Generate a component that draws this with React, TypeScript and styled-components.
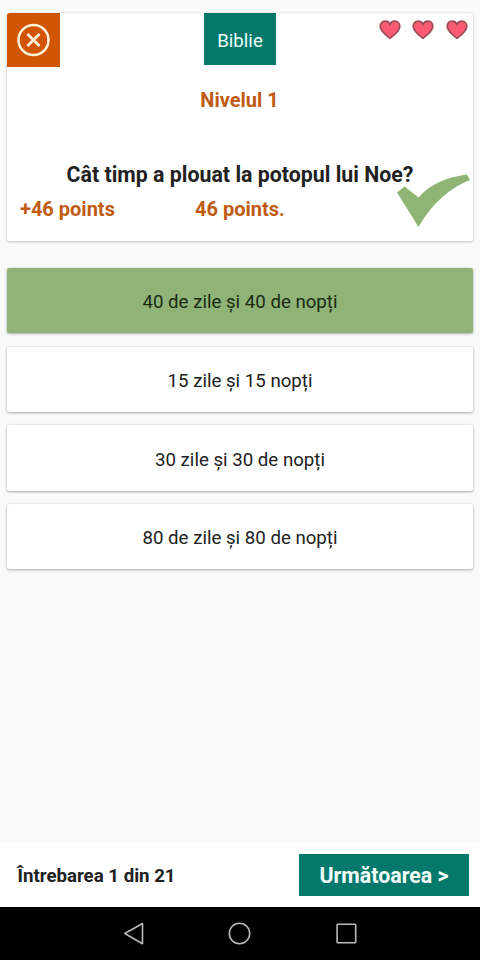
import React from "react";
import styled, { createGlobalStyle } from "styled-components";

const GlobalStyle = createGlobalStyle`
  * { box-sizing: border-box; }
  body { margin: 0; background: #fafafa; }
  button { border: 0; padding: 0; font: inherit; color: inherit; }
`;

const Screen = styled.div`
  width: 480px;
  height: 960px;
  display: flex;
  flex-direction: column;
  overflow: hidden;
  background: #fafafa;
  color: #212121;
  font-family: Roboto, sans-serif;
  white-space: nowrap;
`;

const Main = styled.main`
  flex: 1;
  min-height: 0;
  padding: 13px 7px 0;
`;

const QuestionCard = styled.section`
  height: 228px;
  border-radius: 2.5px;
  background: #fff;
  box-shadow: 0 1px 3px rgba(0, 0, 0, 0.2), 0 0 2px rgba(0, 0, 0, 0.12);
`;

const CardHeader = styled.header`
  display: grid;
  grid-template-columns: 1fr 72px 1fr;
  align-items: start;
  height: 66px;
`;

const CloseButton = styled.button`
  width: 53px;
  height: 54px;
  display: grid;
  place-items: center;
  border-radius: 2.5px 0 0 0;
  background: #d15604;
`;

const Category = styled.div`
  height: 52px;
  line-height: 56px;
  text-align: center;
  font-size: 18.67px;
  color: #e9fffa;
  background: #04796b;
`;

const Lives = styled.div`
  display: flex;
  justify-content: flex-end;
  gap: 11.4px;
  padding: 7px 5.5px 0 0;
`;

const Level = styled.h2`
  margin: 0;
  padding-right: 1px;
  height: 42px;
  line-height: 42px;
  text-align: center;
  font-size: 20px;
  font-weight: 700;
  color: #bf5b12;
`;

const Question = styled.h1`
  margin: 40px 0 0;
  height: 28px;
  line-height: 28px;
  text-align: center;
  font-size: 21.33px;
  font-weight: 700;
`;

const ScoreRow = styled.div`
  display: grid;
  grid-template-columns: 175px 1fr 76px;
  height: 40px;
  padding-left: 13px;
  line-height: 41px;
  font-size: 20px;
  font-weight: 700;
  color: #bf5b12;
`;

const CheckMark = styled.svg`
  display: block;
  margin-top: -15px;
`;

const Answers = styled.div`
  display: flex;
  flex-direction: column;
  gap: 13.3px;
  margin-top: 27px;
`;

const Answer = styled.button<{ $correct?: boolean }>`
  height: 65.4px;
  border-radius: 2.5px;
  padding-top: 3.4px;
  font-size: 18.67px;
  line-height: 62px;
  color: ${(p) => (p.$correct ? "#182b12" : "#212121")};
  background: ${(p) => (p.$correct ? "#90b377" : "#fff")};
  box-shadow: 0 1px 3px rgba(0, 0, 0, 0.3), 0 0 2px rgba(0, 0, 0, 0.12);
`;

const Footer = styled.footer`
  height: 64px;
  display: flex;
  align-items: center;
  justify-content: space-between;
  padding: 0 11px 0 17.5px;
  background: #fff;
`;

const Progress = styled.span`
  padding-top: 1px;
  font-size: 18.67px;
  font-weight: 700;
`;

const NextButton = styled.button`
  width: 170px;
  height: 42px;
  line-height: 40px;
  padding-top: 2px;
  font-size: 21.33px;
  font-weight: 700;
  color: #f4fffd;
  background: #04796b;
`;

const SystemBar = styled.nav`
  height: 53px;
  display: flex;
  justify-content: center;
  gap: 81.7px;
  padding: 14px 0.5px 0 0;
  background: #000;
`;

const NavIcon = styled.svg`
  width: 25px;
  height: 25px;
  fill: none;
  stroke: #b9b9b9;
  stroke-width: 1.6;
  stroke-linejoin: round;
`;

const Heart = () => (
  <svg width="22" height="20" viewBox="0 0 22 20">
    <path
      d="M11 18.2C7.6 15.6 1.2 11.2 1.2 6.2C1.2 3.2 3.4 1.2 6 1.2C8.3 1.2 10 2.2 11 4.2C12 2.2 13.7 1.2 16 1.2C18.6 1.2 20.8 3.2 20.8 6.2C20.8 11.2 14.4 15.6 11 18.2Z"
      fill="#fb5c74"
      stroke="#9b4c57"
      strokeWidth="1.7"
    />
  </svg>
);

const answers = [
  "40 de zile și 40 de nopți",
  "15 zile și 15 nopți",
  "30 zile și 30 de nopți",
  "80 de zile și 80 de nopți",
];

export default function App() {
  return (
    <>
      <GlobalStyle />
      <Screen>
        <Main>
          <QuestionCard>
            <CardHeader>
              <CloseButton aria-label="Închide">
                <svg width="34" height="34" viewBox="0 0 34 34" fill="none" stroke="#fff1da">
                  <circle cx="16.5" cy="17" r="15" strokeWidth="2.5" />
                  <path d="M11.2 11.7L21.8 22.3M21.8 11.7L11.2 22.3" strokeWidth="2.8" strokeLinecap="round" />
                </svg>
              </CloseButton>
              <Category>Biblie</Category>
              <Lives>
                <Heart />
                <Heart />
                <Heart />
              </Lives>
            </CardHeader>
            <Level>Nivelul 1</Level>
            <Question>Cât timp a plouat la potopul lui Noe?</Question>
            <ScoreRow>
              <span>+46 points</span>
              <span>46 points.</span>
              <CheckMark width="73" height="54" viewBox="0 0 73 54">
                <path
                  d="M0 18.5L7.5 12.5L21.5 23.5C34 9.5 50 3 70 0.5L73 6C53 14 35 29 21.5 53L0 18.5Z"
                  fill="#8eb574"
                />
              </CheckMark>
            </ScoreRow>
          </QuestionCard>
          <Answers>
            {answers.map((text, i) => (
              <Answer key={text} $correct={i === 0}>
                {text}
              </Answer>
            ))}
          </Answers>
        </Main>
        <Footer>
          <Progress>Întrebarea 1 din 21</Progress>
          <NextButton>Următoarea &gt;</NextButton>
        </Footer>
        <SystemBar>
          <NavIcon viewBox="0 0 25 25">
            <path d="M3.8 12.5L21.5 2.5V22.7Z" />
          </NavIcon>
          <NavIcon viewBox="0 0 25 25">
            <circle cx="12.5" cy="12.5" r="10.2" />
          </NavIcon>
          <NavIcon viewBox="0 0 25 25">
            <rect x="3.1" y="3.2" width="18.6" height="18.6" rx="0.8" />
          </NavIcon>
        </SystemBar>
      </Screen>
    </>
  );
}
